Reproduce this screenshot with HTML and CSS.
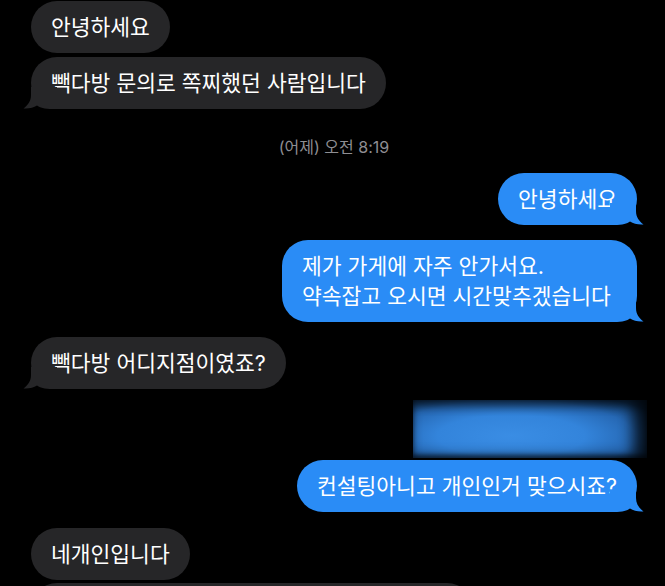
FILE: index.html
```html
<!DOCTYPE html>
<html lang="ko">
<head>
  <meta charset="UTF-8">
  <title>메시지</title>
  <link rel="stylesheet" href="styles.css">
</head>
<body>

<div class="chat">
  <div class="bubble in first">안녕하세요</div>
  <div class="bubble in tail group">빽다방 문의로 쪽찌했던 사람입니다
    <svg class="tail-svg" viewBox="0 0 34 22"><path d="M8 0 V8 C8 14 5 18 0.5 21.5 C6 22 10.5 20.5 14 18.5 C17 20.5 21 22 30 22 H34 V0 Z"/></svg>
  </div>

  <div class="stamp">(어제) 오전 8:19</div>

  <div class="bubble out tail m16">안녕하세요
    <svg class="tail-svg" viewBox="0 0 34 22"><path d="M8 0 V8 C8 14 5 18 0.5 21.5 C6 22 10.5 20.5 14 18.5 C17 20.5 21 22 30 22 H34 V0 Z"/></svg>
  </div>
  <div class="bubble out tail m15"><span>제가 가게에 자주 안가서요.</span><br><span>약속잡고 오시면 시간맞추겠습니다.</span>
    <svg class="tail-svg" viewBox="0 0 34 22"><path d="M8 0 V8 C8 14 5 18 0.5 21.5 C6 22 10.5 20.5 14 18.5 C17 20.5 21 22 30 22 H34 V0 Z"/></svg>
  </div>

  <div class="bubble in tail m15">빽다방 어디지점이였죠?
    <svg class="tail-svg" viewBox="0 0 34 22"><path d="M8 0 V8 C8 14 5 18 0.5 21.5 C6 22 10.5 20.5 14 18.5 C17 20.5 21 22 30 22 H34 V0 Z"/></svg>
  </div>

  <div class="blurred"></div>
  <div class="bubble out tail m2">컨설팅아니고 개인인거 맞으시죠?
    <svg class="tail-svg" viewBox="0 0 34 22"><path d="M8 0 V8 C8 14 5 18 0.5 21.5 C6 22 10.5 20.5 14 18.5 C17 20.5 21 22 30 22 H34 V0 Z"/></svg>
  </div>

  <div class="bubble in m16">네개인입니다</div>
  <div class="bubble in cut">&nbsp;</div>
</div>

</body>
</html>
```

FILE: styles.css
```css
html, body {
  margin: 0;
  background: #000;
}
body {
  font-family: Inter, "Noto Sans CJK KR", sans-serif;
  color: #fff;
  overflow: hidden;
  height: 586px;
}
.chat {
  display: flex;
  flex-direction: column;
  align-items: flex-start;
  padding: 1px 28px 0 31px;
}
.bubble {
  position: relative;
  font-size: 21.5px;
  line-height: 30px;
  padding: 11px 20px;
  border-radius: 26px;
  white-space: nowrap;
}
.bubble.in {
  background: #262628;
  align-self: flex-start;
}
.bubble.out {
  background: #2a8cf6;
  align-self: flex-end;
}
.tail-svg {
  position: absolute;
  bottom: 0;
  width: 34px;
  height: 22px;
}
.in .tail-svg {
  left: -8px;
  fill: #262628;
}
.out .tail-svg {
  right: -7px;
  fill: #2a8cf6;
  transform: scaleX(-1);
}
.group { margin-top: 4px; }
.m2 { margin-top: 2px; }
.m15 { margin-top: 15px; }
.m16 { margin-top: 16px; }
.stamp {
  align-self: center;
  margin-top: 28px;
  font-size: 16px;
  line-height: 20px;
  color: #8e8e93;
}
.blurred {
  align-self: flex-end;
  margin: 11px -10px 0 0;
  width: 234px;
  height: 58px;
  background: radial-gradient(ellipse 70% 80% at 42% 62%, #3a8de4 0%, #3384db 45%, #2668b4 75%, #123965 100%);
  box-shadow: inset -14px 0 14px rgba(0, 0, 0, 0.75), inset 0 6px 10px rgba(0, 0, 0, 0.45), inset 0 -3px 4px rgba(0, 0, 0, 0.5);
}
.cut {
  margin-top: 3px;
  width: 402px;
}
```
